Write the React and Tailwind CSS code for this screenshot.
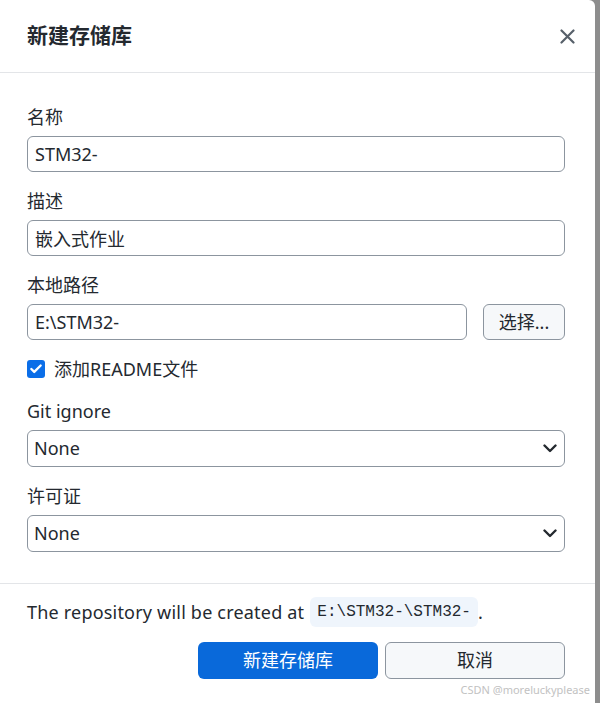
import { Check } from 'lucide-react'

const font = { fontFamily: '"Noto Sans", "Noto Sans CJK SC", sans-serif' }

const Field = ({ label, children, className = '' }) => (
  <div className={className}>
    <div className="mb-[7px] h-[24px] text-[18px] leading-[24px] text-[#24292f]">{label}</div>
    {children}
  </div>
)

const TextInput = ({ value }) => (
  <input
    readOnly
    value={value}
    className="h-[36px] w-full rounded-[6px] border border-[#8c959f] bg-white px-[7px] text-[18px] text-[#24292f] outline-none"
    style={font}
  />
)

const Select = ({ value }) => (
  <div className="relative">
    <select
      defaultValue={value}
      className="h-[37px] w-full appearance-none rounded-[6px] border border-[#8c959f] bg-white px-[6px] text-[18px] text-[#24292f] outline-none"
      style={font}
    >
      <option>None</option>
    </select>
    <svg className="pointer-events-none absolute right-[8px] top-[14px]" width="14" height="9" viewBox="0 0 14 9" fill="none">
      <path d="M1.5 1.5 7 7l5.5-5.5" stroke="#24292f" strokeWidth="2.4" strokeLinecap="round" strokeLinejoin="round" />
    </svg>
  </div>
)

export default function App() {
  return (
    <div className="flex min-h-[703px] bg-[#8d8d8d]" style={font}>
      <div className="relative flex w-[595px] flex-col rounded-tr-[6px] bg-white">
        <div className="flex h-[73px] items-center justify-between border-b border-[#e3e5e8] pl-[27px] pr-[20px]">
          <h1 className="text-[21px] font-bold text-[#24292f]">新建存储库</h1>
          <svg width="15" height="15" viewBox="0 0 15 15" fill="none">
            <path d="M1.5 1.5l12 12M13.5 1.5l-12 12" stroke="#57606a" strokeWidth="2.2" strokeLinecap="round" />
          </svg>
        </div>

        <div className="pb-[31px] pl-[27px] pr-[30px] pt-[32px]">
          <Field label="名称">
            <TextInput value="STM32-" />
          </Field>
          <Field label="描述" className="mt-[17px]">
            <TextInput value="嵌入式作业" />
          </Field>
          <Field label="本地路径" className="mt-[17px]">
            <div className="flex gap-[16px]">
              <TextInput value="E:\STM32-" />
              <button className="h-[36px] w-[82px] shrink-0 rounded-[6px] border border-[#8c959f] bg-[#f6f8fa] text-[18px] text-[#24292f]">
                选择...
              </button>
            </div>
          </Field>
          <label className="mt-[17px] flex h-[24px] items-center gap-[9px] text-[18px] text-[#24292f]">
            <span className="flex h-[18px] w-[18px] items-center justify-center rounded-[3px] bg-[#0b6ee8]">
              <Check className="h-[14px] w-[14px] text-white" strokeWidth={4} />
            </span>
            添加README文件
          </label>
          <Field label="Git ignore" className="mt-[18px]">
            <Select value="None" />
          </Field>
          <Field label="许可证" className="mt-[17px]">
            <Select value="None" />
          </Field>
        </div>

        <div className="border-t border-[#e3e5e8] pb-[18px] pl-[27px] pr-[30px] pt-[13px]">
          <p className="flex h-[30px] items-center text-[18px] tracking-[0.2px] text-[#24292f]">
            The repository will be created at
            <code
              className="ml-[6px] flex h-[30px] items-center rounded-[6px] bg-[#eff5fc] px-[7px] text-[16px] tracking-normal"
              style={{ fontFamily: '"Liberation Mono", "DejaVu Sans Mono", monospace' }}
            >
              E:\STM32-\STM32-
            </code>
            .
          </p>
          <div className="mt-[15px] flex justify-end gap-[7px]">
            <button className="h-[37px] w-[180px] rounded-[6px] bg-[#0969da] text-[18px] text-white">新建存储库</button>
            <button className="h-[37px] w-[180px] rounded-[6px] border border-[#8c959f] bg-[#f6f8fa] text-[18px] text-[#24292f]">
              取消
            </button>
          </div>
        </div>

        <span className="absolute bottom-[5px] right-[5px] text-[11px] text-[#c2c2c2]">CSDN @moreluckyplease</span>
      </div>
    </div>
  )
}
